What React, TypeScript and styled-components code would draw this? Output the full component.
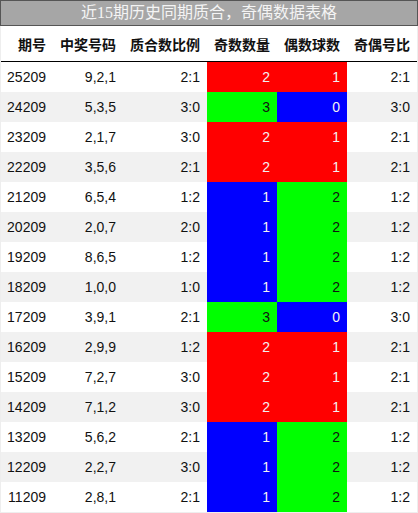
import * as React from 'react'
import styled, { createGlobalStyle } from 'styled-components'

const GlobalStyle = createGlobalStyle`
  body {
    margin: 0;
    background: #fff;
    font-family: "Liberation Sans", "Noto Sans CJK SC", sans-serif;
  }
`

const Page = styled.div`
  width: 418px;
`

const Title = styled.div`
  height: 24px;
  border: 1px solid #555;
  background-color: #a6a6a6;
  color: #f4f4f4;
  font-family: "Liberation Serif", "Noto Sans CJK SC", serif;
  font-size: 16px;
  line-height: 24px;
  text-align: center;
`

const Table = styled.div`
  border: 1px solid #eee;
  border-top: none;
`

const Row = styled.div<{ $alt?: boolean }>`
  display: grid;
  grid-template-columns: 52px 70px 84px 70px 70px 70px;
  height: 30px;
  background-color: ${p => (p.$alt ? '#f1f1f1' : '#fff')};
`

const HeadRow = styled(Row)`
  height: 35px;
  border-bottom: 1px solid #000;
`

const HeadCell = styled.div`
  display: flex;
  align-items: center;
  justify-content: flex-end;
  padding-right: 7px;
  font-size: 14px;
  font-weight: bold;
  color: #111;
  white-space: nowrap;
`

const Cell = styled.div<{ $bg?: string; $fg?: string }>`
  display: flex;
  align-items: center;
  justify-content: flex-end;
  padding-right: 7px;
  font-size: 14px;
  color: ${p => p.$fg || '#111'};
  background-color: ${p => p.$bg || 'transparent'};
`

const palette: Record<string, { bg: string; fg: string }> = {
  red: { bg: '#ff0000', fg: '#f2f2f2' },
  green: { bg: '#00ff00', fg: '#111' },
  blue: { bg: '#0000ff', fg: '#f2f2f2' },
}

const oddColor = (n: number) => (n === 3 ? 'green' : n === 2 ? 'red' : 'blue')
const evenColor = (n: number) => (n === 2 ? 'green' : n === 1 ? 'red' : 'blue')

const rows: [string, string, string, number, number, string][] = [
  ['25209', '9,2,1', '2:1', 2, 1, '2:1'],
  ['24209', '5,3,5', '3:0', 3, 0, '3:0'],
  ['23209', '2,1,7', '3:0', 2, 1, '2:1'],
  ['22209', '3,5,6', '2:1', 2, 1, '2:1'],
  ['21209', '6,5,4', '1:2', 1, 2, '1:2'],
  ['20209', '2,0,7', '2:0', 1, 2, '1:2'],
  ['19209', '8,6,5', '1:2', 1, 2, '1:2'],
  ['18209', '1,0,0', '1:0', 1, 2, '1:2'],
  ['17209', '3,9,1', '2:1', 3, 0, '3:0'],
  ['16209', '2,9,9', '1:2', 2, 1, '2:1'],
  ['15209', '7,2,7', '3:0', 2, 1, '2:1'],
  ['14209', '7,1,2', '3:0', 2, 1, '2:1'],
  ['13209', '5,6,2', '2:1', 1, 2, '1:2'],
  ['12209', '2,2,7', '3:0', 1, 2, '1:2'],
  ['11209', '2,8,1', '2:1', 1, 2, '1:2'],
]

const headers = ['期号', '中奖号码', '质合数比例', '奇数数量', '偶数球数', '奇偶号比']

const App = () => {
  return (
    <Page>
      <GlobalStyle />
      <Title>近15期历史同期质合，奇偶数据表格</Title>
      <Table>
        <HeadRow>
          {headers.map(h => (
            <HeadCell key={h}>{h}</HeadCell>
          ))}
        </HeadRow>
        {rows.map(([issue, nums, ratio, odd, even, oe], i) => {
          const o = palette[oddColor(odd)]
          const e = palette[evenColor(even)]
          return (
            <Row key={issue} $alt={i % 2 === 1}>
              <Cell>{issue}</Cell>
              <Cell>{nums}</Cell>
              <Cell>{ratio}</Cell>
              <Cell $bg={o.bg} $fg={o.fg}>{odd}</Cell>
              <Cell $bg={e.bg} $fg={e.fg}>{even}</Cell>
              <Cell>{oe}</Cell>
            </Row>
          )
        })}
      </Table>
    </Page>
  )
}

export default App
